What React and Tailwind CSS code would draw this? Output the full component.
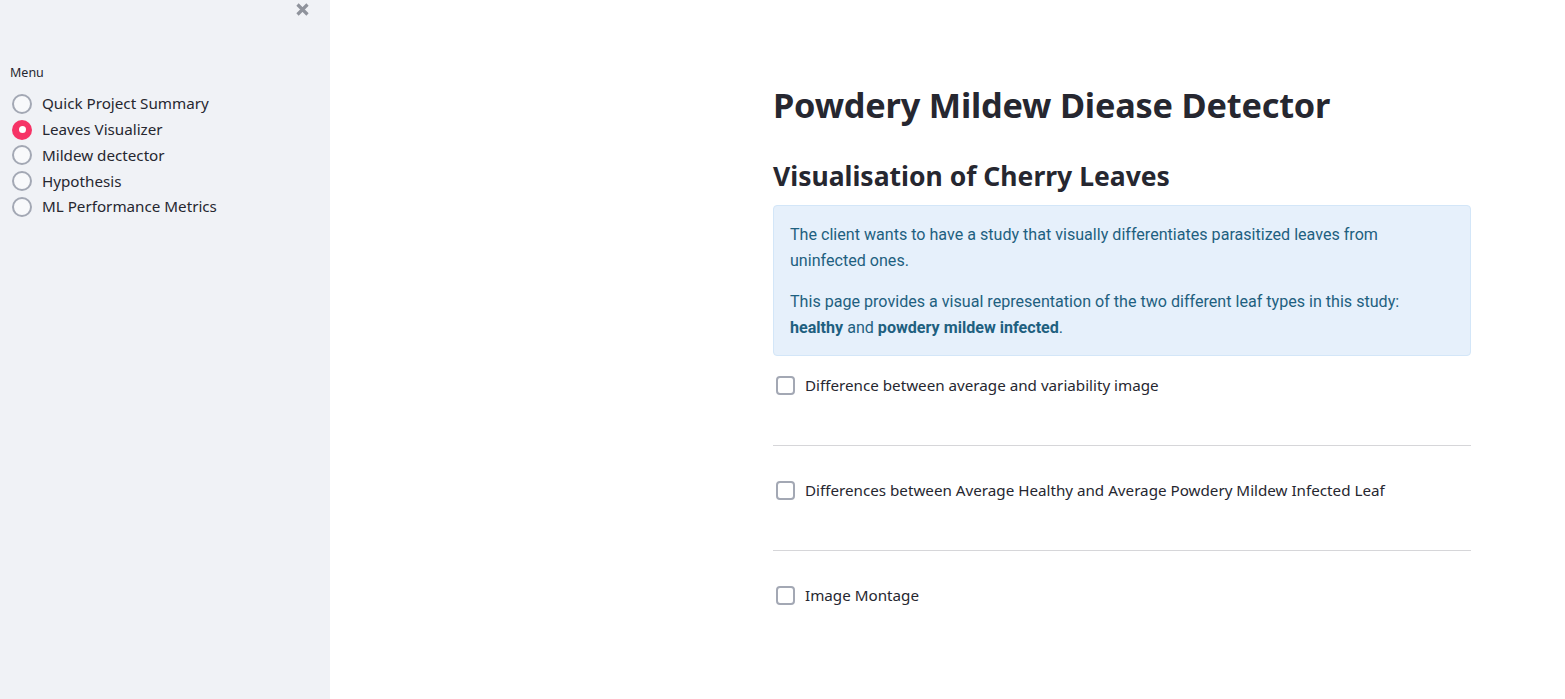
const menuItems = [
  "Quick Project Summary",
  "Leaves Visualizer",
  "Mildew dectector",
  "Hypothesis",
  "ML Performance Metrics",
];

const checks = [
  "Difference between average and variability image",
  "Differences between Average Healthy and Average Powdery Mildew Infected Leaf",
  "Image Montage",
];

const Radio = ({ checked }) =>
  checked ? (
    <span className="w-5 h-5 rounded-full bg-[#f63366] flex items-center justify-center shrink-0">
      <span className="w-[7px] h-[7px] rounded-full bg-white" />
    </span>
  ) : (
    <span className="w-5 h-5 rounded-full border-2 border-[#a3a8b4] bg-[#f8f9fb] shrink-0" />
  );

const Checkbox = ({ label }) => (
  <label className="flex items-center gap-[10px] h-6 pl-[3px]">
    <span className="w-[19px] h-[19px] rounded-[4px] border-2 border-[#a3a8b4] bg-white shrink-0" />
    <span className="text-[15.2px] text-[#262730]">{label}</span>
  </label>
);

export default function App() {
  return (
    <div className="flex w-full h-[699px] bg-white font-['Noto_Sans',sans-serif] text-[#262730] overflow-hidden">
      <aside className="w-[330px] shrink-0 bg-[#f0f2f6] relative">
        <button className="absolute left-[293px] top-0 w-[18px] h-[18px] flex items-center justify-center text-[#8f939c]">
          <svg width="15" height="15" viewBox="0 0 15 15">
            <path d="M2.5 2.5 L12.5 12.5 M12.5 2.5 L2.5 12.5" stroke="currentColor" strokeWidth="3.2" strokeLinecap="butt" />
          </svg>
        </button>
        <div className="pt-[65px] pl-[10px]">
          <p className="text-[12.5px] leading-4 mb-[10px]">Menu</p>
          <div className="flex flex-col">
            {menuItems.map((item, i) => (
              <div key={item} className="flex items-center gap-[10px] h-[25.7px] pl-[2px]">
                <Radio checked={i === 1} />
                <span className="text-[15.2px]">{item}</span>
              </div>
            ))}
          </div>
        </div>
      </aside>

      <main className="flex-1 pl-[443px]">
        <div className="w-[698px] pt-[80px]">
          <h1 className="text-[34.3px] font-bold leading-[50px] tracking-[-0.2px] text-[#262730]">Powdery Mildew Diease Detector</h1>
          <h2 className="mt-[26px] text-[26.5px] font-bold leading-[40px] text-[#262730]">Visualisation of Cherry Leaves</h2>
          <div className="mt-[9px] h-[151px] rounded-[4px] border border-[#d3e6f8] bg-[#e6f0fb] px-4 pt-[16px] text-[16.1px] leading-[26px] text-[#1e6080] font-['Roboto',sans-serif]">
            <p>
              The client wants to have a study that visually differentiates parasitized leaves from
              <br />
              uninfected ones.
            </p>
            <p className="mt-[15px]">
              This page provides a visual representation of the two different leaf types in this study:
              <br />
              <strong className="font-bold">healthy</strong> and <strong className="font-bold">powdery mildew infected</strong>.
            </p>
          </div>

          <div className="mt-[17px]">
            <Checkbox label={checks[0]} />
            <hr className="mt-[48px] border-t border-[#d6d6d9]" />
            <div className="mt-[32px]">
              <Checkbox label={checks[1]} />
            </div>
            <hr className="mt-[48px] border-t border-[#d6d6d9]" />
            <div className="mt-[32px]">
              <Checkbox label={checks[2]} />
            </div>
          </div>
        </div>
      </main>
    </div>
  );
}
